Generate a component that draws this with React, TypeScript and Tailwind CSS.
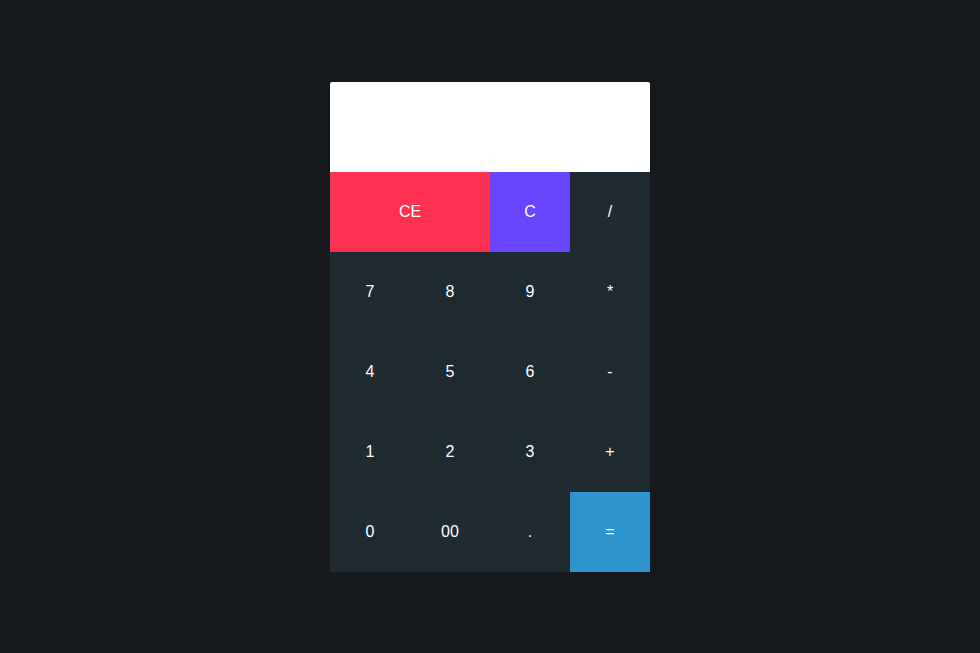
const keys: { label: string; className: string }[] = [
  { label: 'CE', className: 'col-span-2 bg-[#ff3152]' },
  { label: 'C', className: 'bg-[#6a45ff]' },
  { label: '/', className: 'bg-[#202a31]' },
  { label: '7', className: 'bg-[#202a31]' },
  { label: '8', className: 'bg-[#202a31]' },
  { label: '9', className: 'bg-[#202a31]' },
  { label: '*', className: 'bg-[#202a31]' },
  { label: '4', className: 'bg-[#202a31]' },
  { label: '5', className: 'bg-[#202a31]' },
  { label: '6', className: 'bg-[#202a31]' },
  { label: '-', className: 'bg-[#202a31]' },
  { label: '1', className: 'bg-[#202a31]' },
  { label: '2', className: 'bg-[#202a31]' },
  { label: '3', className: 'bg-[#202a31]' },
  { label: '+', className: 'bg-[#202a31]' },
  { label: '0', className: 'bg-[#202a31]' },
  { label: '00', className: 'bg-[#202a31]' },
  { label: '.', className: 'bg-[#202a31]' },
  { label: '=', className: 'bg-[#2d94cd]' },
];

const App = () => {
  return (
    <div className="flex h-[653px] w-full justify-center bg-[#15191c] pt-[82px] font-['Liberation_Sans',Arial,sans-serif]">
      <div className="w-[320px]">
        <div className="h-[90px] w-full rounded-t-[2px] bg-white" />
        <div className="grid grid-cols-4">
          {keys.map((k) => (
            <button
              key={k.label}
              type="button"
              className={`flex h-20 items-center justify-center text-base text-white ${k.className}`}
            >
              {k.label}
            </button>
          ))}
        </div>
      </div>
    </div>
  );
};

export default App;
